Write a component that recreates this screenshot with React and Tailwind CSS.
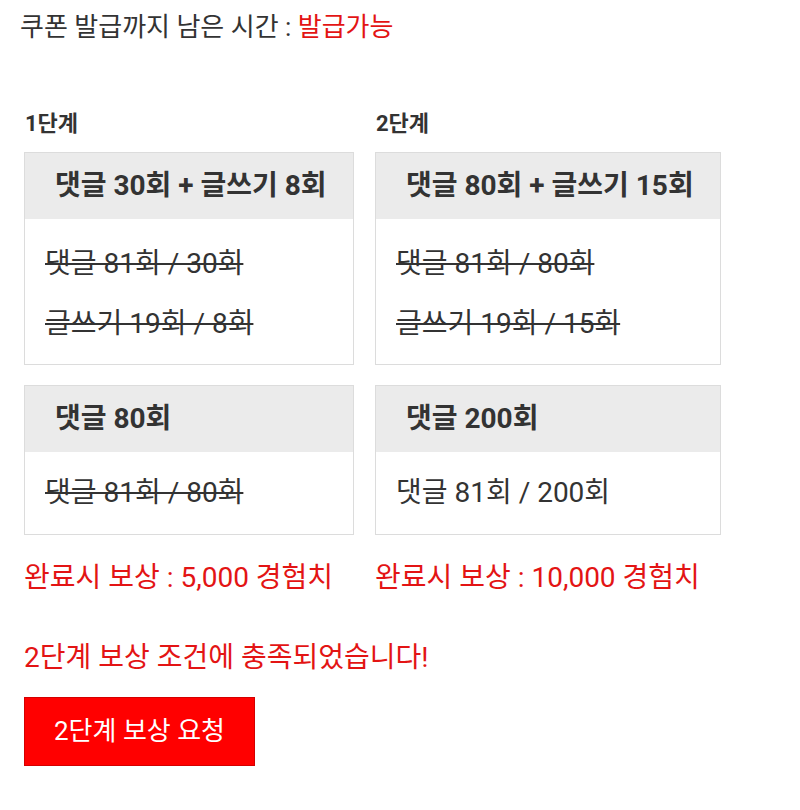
const font = { fontFamily: 'Roboto, "Noto Sans CJK KR", sans-serif' }

function StepBox({ title, lines, bodyPad }) {
    return (
        <div className="border border-[#dcdcdc] bg-white">
            <div className="h-[66px] bg-[#ebebeb] pl-[30px] flex items-center text-[28px] font-bold text-[#333] whitespace-nowrap">
                {title}
            </div>
            <div className={`${bodyPad} px-[20px]`}>
                {lines.map((l, i) => (
                    <div
                        key={i}
                        className={`leading-[60px] text-[28px] text-[#333] whitespace-nowrap ${l.done ? 'line-through' : ''}`}>
                        {l.text}
                    </div>
                ))}
            </div>
        </div>
    )
}

function Column({ label, width, boxes, reward }) {
    return (
        <div className={`${width} flex flex-col`}>
            <div className="pl-[1px] h-[28px] leading-[28px] text-[22px] font-bold text-[#333]">{label}</div>
            <div className="mt-[14px] flex flex-col gap-[20px]">
                {boxes.map((b, i) => (
                    <StepBox key={i} {...b} />
                ))}
            </div>
            <div className="mt-[26px] leading-[34px] text-[28px] text-[#e31414] whitespace-nowrap">{reward}</div>
        </div>
    )
}

export default function App() {
    return (
        <div className="w-[800px] h-[810px] bg-white" style={font}>
            <div className="pl-[20px] pt-[10px] leading-[34px] text-[26px] text-[#333]">
                쿠폰 발급까지 남은 시간 : <span className="text-[#e31414]">발급가능</span>
            </div>

            <div className="mt-[66px] pl-[24px] flex gap-[21px] items-start">
                <Column
                    label="1단계"
                    width="w-[330px]"
                    reward="완료시 보상 : 5,000 경험치"
                    boxes={[
                        {
                            title: '댓글 30회 + 글쓰기 8회',
                            bodyPad: 'pt-[15px] pb-[10px]',
                            lines: [
                                { text: '댓글 81회 / 30회', done: true },
                                { text: '글쓰기 19회 / 8회', done: true },
                            ],
                        },
                        {
                            title: '댓글 80회',
                            bodyPad: 'py-[11px]',
                            lines: [{ text: '댓글 81회 / 80회', done: true }],
                        },
                    ]}
                />
                <Column
                    label="2단계"
                    width="w-[346px]"
                    reward="완료시 보상 : 10,000 경험치"
                    boxes={[
                        {
                            title: '댓글 80회 + 글쓰기 15회',
                            bodyPad: 'pt-[15px] pb-[10px]',
                            lines: [
                                { text: '댓글 81회 / 80회', done: true },
                                { text: '글쓰기 19회 / 15회', done: true },
                            ],
                        },
                        {
                            title: '댓글 200회',
                            bodyPad: 'py-[11px]',
                            lines: [{ text: '댓글 81회 / 200회', done: false }],
                        },
                    ]}
                />
            </div>

            <div className="mt-[46px] pl-[24px] leading-[34px] text-[28px] text-[#e31414]">
                2단계 보상 조건에 충족되었습니다!
            </div>
            <div className="pl-[24px] mt-[22px]">
                <button className="w-[231px] h-[69px] bg-[#ff0000] border border-[#d40000] text-white text-[26px] flex items-center justify-center" style={font}>
                    2단계 보상 요청
                </button>
            </div>
        </div>
    )
}
